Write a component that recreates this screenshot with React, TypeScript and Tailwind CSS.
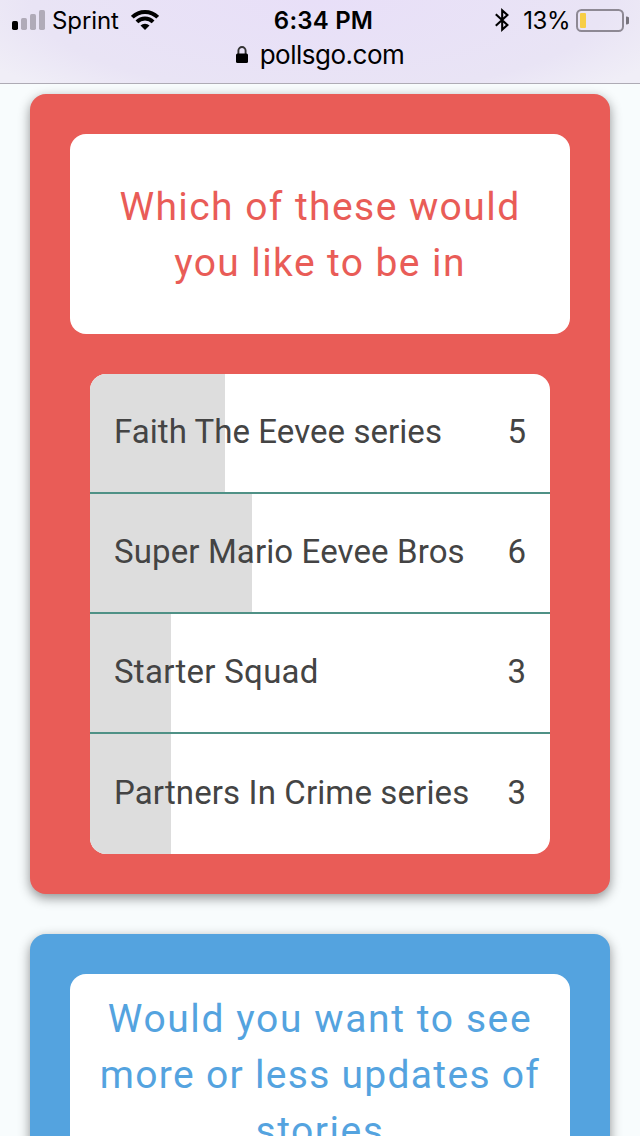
type Option = { label: string; votes: number; tracking: string };

const options: Option[] = [
  { label: "Faith The Eevee series", votes: 5, tracking: "tracking-[0.06px]" },
  { label: "Super Mario Eevee Bros", votes: 6, tracking: "tracking-[0.12px]" },
  { label: "Starter Squad", votes: 3, tracking: "tracking-[0.28px]" },
  { label: "Partners In Crime series", votes: 3, tracking: "tracking-[0.12px]" },
];

const total = options.reduce((sum, option) => sum + option.votes, 0);

function StatusBar() {
  return (
    <div className="grid h-10 grid-cols-3 items-center text-2xl leading-none">
      <div className="flex items-center pl-3">
        <svg width="33" height="20" viewBox="0 0 33 20">
          <rect x="0" y="11" width="6" height="9" rx="1.7" fill="#000" />
          <rect x="9" y="8" width="6" height="12" rx="1.7" fill="#b0abb8" />
          <rect x="18" y="4" width="6" height="16" rx="1.7" fill="#b0abb8" />
          <rect x="27" y="0" width="6" height="20" rx="1.7" fill="#b0abb8" />
        </svg>
        <span className="ml-[7px] pt-[2px] tracking-[-0.1px]">Sprint</span>
        <svg className="ml-3" width="28" height="20" viewBox="0 0 28 20">
          <g fill="none" stroke="#000" strokeWidth="3.9">
            <path d="M1.3 7.2a18 18 0 0 1 25.4 0" />
            <path d="M5.9 11.9a11.5 11.5 0 0 1 16.2 0" />
          </g>
          <path d="M14 20l-4.5-4.4a6.2 6.2 0 0 1 9 0z" />
        </svg>
      </div>
      <span className="pt-[2px] pl-[7px] text-center font-semibold tracking-[0.2px] whitespace-nowrap">6:34 PM</span>
      <div className="flex items-center justify-end pr-[11px]">
        <svg width="14" height="24" viewBox="0 0 14 24" fill="none" stroke="#000" strokeWidth="2.1">
          <path d="M.8 6.2L12.4 17L7.2 21.6V2.4l5.2 4.6L.8 17.8" />
        </svg>
        <span className="ml-[14px] pt-[2px] tracking-[-0.5px]">13%</span>
        <svg className="mt-px ml-[6px]" width="53" height="24" viewBox="0 0 53 24">
          <rect x="1" y="1" width="46" height="21" rx="4.5" fill="none" stroke="#8e8994" strokeWidth="2" />
          <rect x="4" y="4" width="6" height="15" rx="1" fill="#f7ce46" />
          <path d="M50 7.5a4 4 0 0 1 0 8z" fill="#77737c" />
        </svg>
      </div>
    </div>
  );
}

function AddressBar() {
  return (
    <div className="flex h-[30px] items-center justify-center text-[26px] leading-none">
      <svg className="mb-px" width="12" height="17" viewBox="0 0 12 17">
        <path d="M2.4 9V4.6a3.6 3.6 0 0 1 7.2 0V9" fill="none" stroke="#333" strokeWidth="1.9" />
        <rect x="0" y="7.5" width="12" height="9.5" rx="1.5" />
      </svg>
      <span className="ml-3 tracking-[-0.5px]">pollsgo.com</span>
    </div>
  );
}

function OptionRow({ option }: { option: Option }) {
  return (
    <li className="grid h-[120px] border-b-2 border-[#4f9186] last:border-b-0">
      <div
        className="col-start-1 row-start-1 bg-[#ddd]"
        style={{ width: `${(option.votes / total) * 100}%` }}
      />
      <div className="col-start-1 row-start-1 flex items-center justify-between px-6 pb-[2px] text-[33px] whitespace-nowrap text-[#444]">
        <span className={option.tracking}>{option.label}</span>
        <span>{option.votes}</span>
      </div>
    </li>
  );
}

export default function App() {
  return (
    <div className="flex h-[1136px] w-[640px] flex-col overflow-hidden bg-[#f8fcfd] font-['Inter',sans-serif] text-black">
      <header className="h-[84px] shrink-0 border-b border-[#aeabb5] bg-[radial-gradient(ellipse_75%_190%_at_50%_0%,#e8dff8_0%,#e9e4f5_60%,#f0eef7_80%)]">
        <StatusBar />
        <AddressBar />
      </header>
      <main className="flex flex-col gap-10 px-[30px] pt-[10px] font-['Roboto',sans-serif]">
        <section className="flex h-[800px] shrink-0 flex-col rounded-2xl bg-[#e95c57] p-10 shadow-[0_4px_12px_rgba(0,0,0,0.43)]">
          <h2 className="flex h-[200px] flex-col items-center justify-center rounded-2xl bg-white pt-[2px] text-[39px] leading-[56px] font-[450] whitespace-nowrap text-[#e95c57]">
            <span className="tracking-[1.43px]">Which of these would</span>
            <span className="tracking-[1.4px]">you like to be in</span>
          </h2>
          <ul className="mx-5 mt-10 overflow-hidden rounded-2xl bg-white">
            {options.map((option) => (
              <OptionRow key={option.label} option={option} />
            ))}
          </ul>
        </section>
        <section className="flex h-[800px] shrink-0 flex-col rounded-2xl bg-[#54a3df] p-10 shadow-[0_4px_12px_rgba(0,0,0,0.43)]">
          <h2 className="flex h-[200px] flex-col items-center justify-center rounded-2xl bg-white pt-[2px] text-[39px] leading-[56px] font-[450] whitespace-nowrap text-[#54a3df]">
            <span className="tracking-[1.6px]">Would you want to see</span>
            <span className="tracking-[1.3px]">more or less updates of</span>
            <span className="tracking-[1.5px]">stories</span>
          </h2>
        </section>
      </main>
    </div>
  );
}
